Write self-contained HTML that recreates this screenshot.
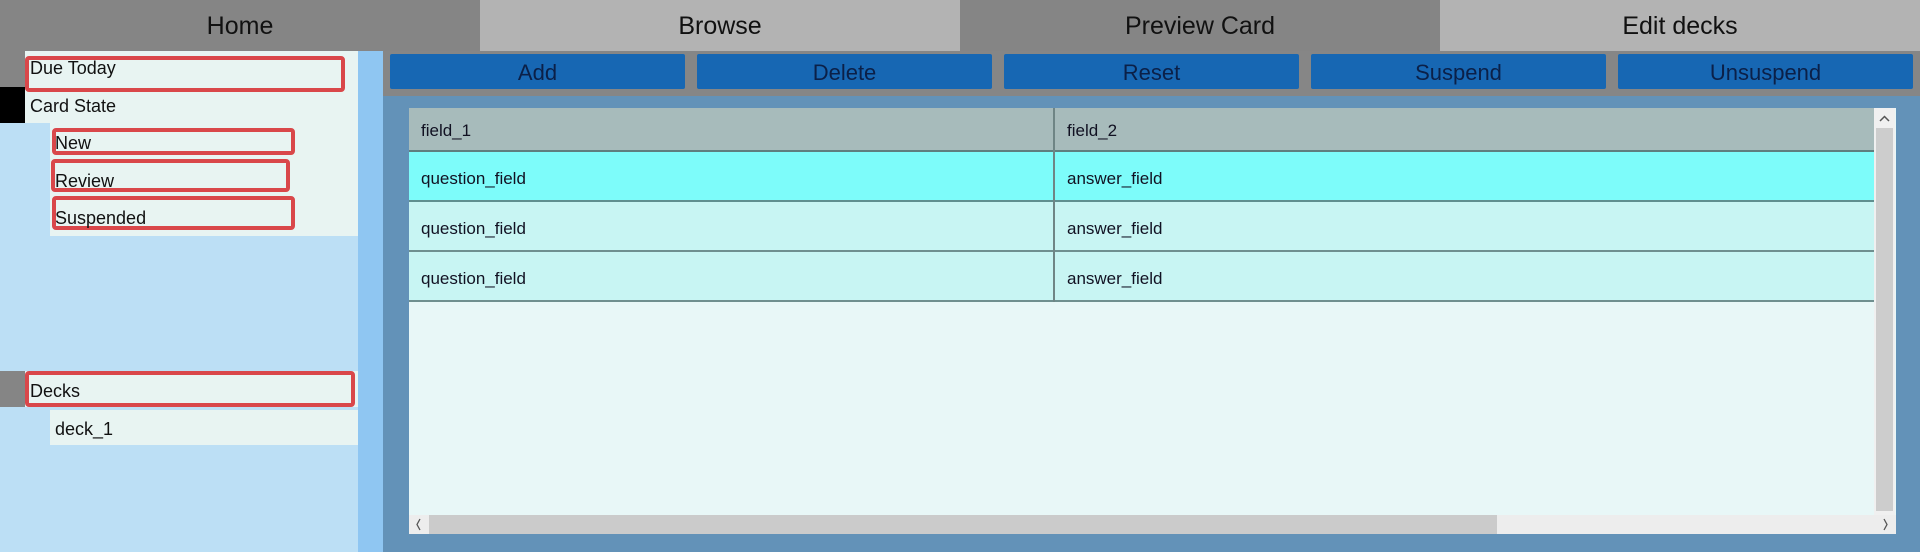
<!DOCTYPE html>
<html><head><style>
*{margin:0;padding:0;box-sizing:border-box}
body{width:1920px;height:552px;position:relative;overflow:hidden;background:#bcdff5;font-family:"Liberation Sans","DejaVu Sans",sans-serif;color:#111}
.a{position:absolute}
.tab{top:0;height:51px;width:480px;font-size:25px;text-align:center;line-height:52px;color:#111}
.btn{top:54px;height:35px;width:295px;background:#1767b3;color:#0b2048;font-size:22px;text-align:center;line-height:38px;border-radius:2px}
.box{border:4px solid #d9474a;border-radius:4px}
.sb{font-size:18px;color:#111}
.cell{font-size:17px;padding-left:12px;color:#112}
</style></head><body>
<div class="a tab" style="left:0;background:#858585">Home</div>
<div class="a tab" style="left:480px;background:#b3b3b3">Browse</div>
<div class="a tab" style="left:960px;background:#858585">Preview Card</div>
<div class="a tab" style="left:1440px;background:#b3b3b3">Edit decks</div>

<div class="a" style="left:0;top:51px;width:25px;height:36px;background:#858585"></div>
<div class="a" style="left:0;top:87px;width:25px;height:36px;background:#000"></div>
<div class="a" style="left:25px;top:51px;width:333px;height:72px;background:#e8f4f2"></div>
<div class="a" style="left:50px;top:123px;width:308px;height:113px;background:#e8f4f2"></div>
<div class="a" style="left:358px;top:51px;width:25px;height:501px;background:#8fc6f2"></div>
<div class="a box" style="left:25px;top:56px;width:320px;height:36px"></div>
<div class="a sb" style="left:30px;top:58px">Due Today</div>
<div class="a sb" style="left:30px;top:96px">Card State</div>
<div class="a box" style="left:52px;top:128px;width:243px;height:27px"></div>
<div class="a sb" style="left:55px;top:133px">New</div>
<div class="a box" style="left:51px;top:159px;width:239px;height:33px"></div>
<div class="a sb" style="left:55px;top:171px">Review</div>
<div class="a box" style="left:52px;top:196px;width:243px;height:34px"></div>
<div class="a sb" style="left:55px;top:208px">Suspended</div>

<div class="a" style="left:0;top:371px;width:25px;height:36px;background:#858585"></div>
<div class="a" style="left:25px;top:371px;width:333px;height:36px;background:#e8f4f2"></div>
<div class="a box" style="left:25px;top:371px;width:330px;height:36px"></div>
<div class="a sb" style="left:30px;top:381px">Decks</div>
<div class="a" style="left:50px;top:410px;width:308px;height:35px;background:#e8f4f2"></div>
<div class="a sb" style="left:55px;top:419px">deck_1</div>

<div class="a" style="left:383px;top:51px;width:1537px;height:45px;background:#868686"></div>
<div class="a" style="left:383px;top:96px;width:1537px;height:456px;background:#6392b8"></div>
<div class="a btn" style="left:390px">Add</div>
<div class="a btn" style="left:697px">Delete</div>
<div class="a btn" style="left:1004px">Reset</div>
<div class="a btn" style="left:1311px">Suspend</div>
<div class="a btn" style="left:1618px">Unsuspend</div>

<div class="a" style="left:409px;top:108px;width:1487px;height:426px;background:#e8f7f7"></div>
<div class="a" style="left:409px;top:108px;width:1465px;height:44px;background:#a7bbbb;border-bottom:2px solid #5f7f7f"></div>
<div class="a" style="left:409px;top:152px;width:1465px;height:50px;background:#7dfcfa;border-bottom:2px solid #5f8f8f"></div>
<div class="a" style="left:409px;top:202px;width:1465px;height:50px;background:#c8f5f3;border-bottom:2px solid #6f8f8f"></div>
<div class="a" style="left:409px;top:252px;width:1465px;height:50px;background:#c8f5f3;border-bottom:2px solid #6f8f8f"></div>
<div class="a" style="left:1053px;top:108px;width:2px;height:194px;background:#6f8585"></div>
<div class="a cell" style="left:409px;top:121px">field_1</div>
<div class="a cell" style="left:1055px;top:121px">field_2</div>
<div class="a cell" style="left:409px;top:169px">question_field</div>
<div class="a cell" style="left:1055px;top:169px">answer_field</div>
<div class="a cell" style="left:409px;top:219px">question_field</div>
<div class="a cell" style="left:1055px;top:219px">answer_field</div>
<div class="a cell" style="left:409px;top:269px">question_field</div>
<div class="a cell" style="left:1055px;top:269px">answer_field</div>

<div class="a" style="left:1874px;top:108px;width:21px;height:407px;background:#f0f0f0"></div>
<div class="a" style="left:1876px;top:128px;width:17px;height:383px;background:#cdcdcd"></div>
<svg class="a" style="left:1874px;top:108px" width="21" height="20"><path d="M6 13 L10.5 8.5 L15 13" fill="none" stroke="#555" stroke-width="1.5"/></svg>
<div class="a" style="left:409px;top:515px;width:1487px;height:19px;background:#ededed"></div>
<div class="a" style="left:429px;top:515px;width:1068px;height:19px;background:#cbcbcb"></div>
<svg class="a" style="left:409px;top:515px" width="18" height="19"><path d="M11 4 L8 9.5 L11 15" fill="none" stroke="#555" stroke-width="1.3"/></svg>
<svg class="a" style="left:1877px;top:515px" width="18" height="19"><path d="M7 4 L10 9.5 L7 15" fill="none" stroke="#555" stroke-width="1.3"/></svg>
</body></html>
